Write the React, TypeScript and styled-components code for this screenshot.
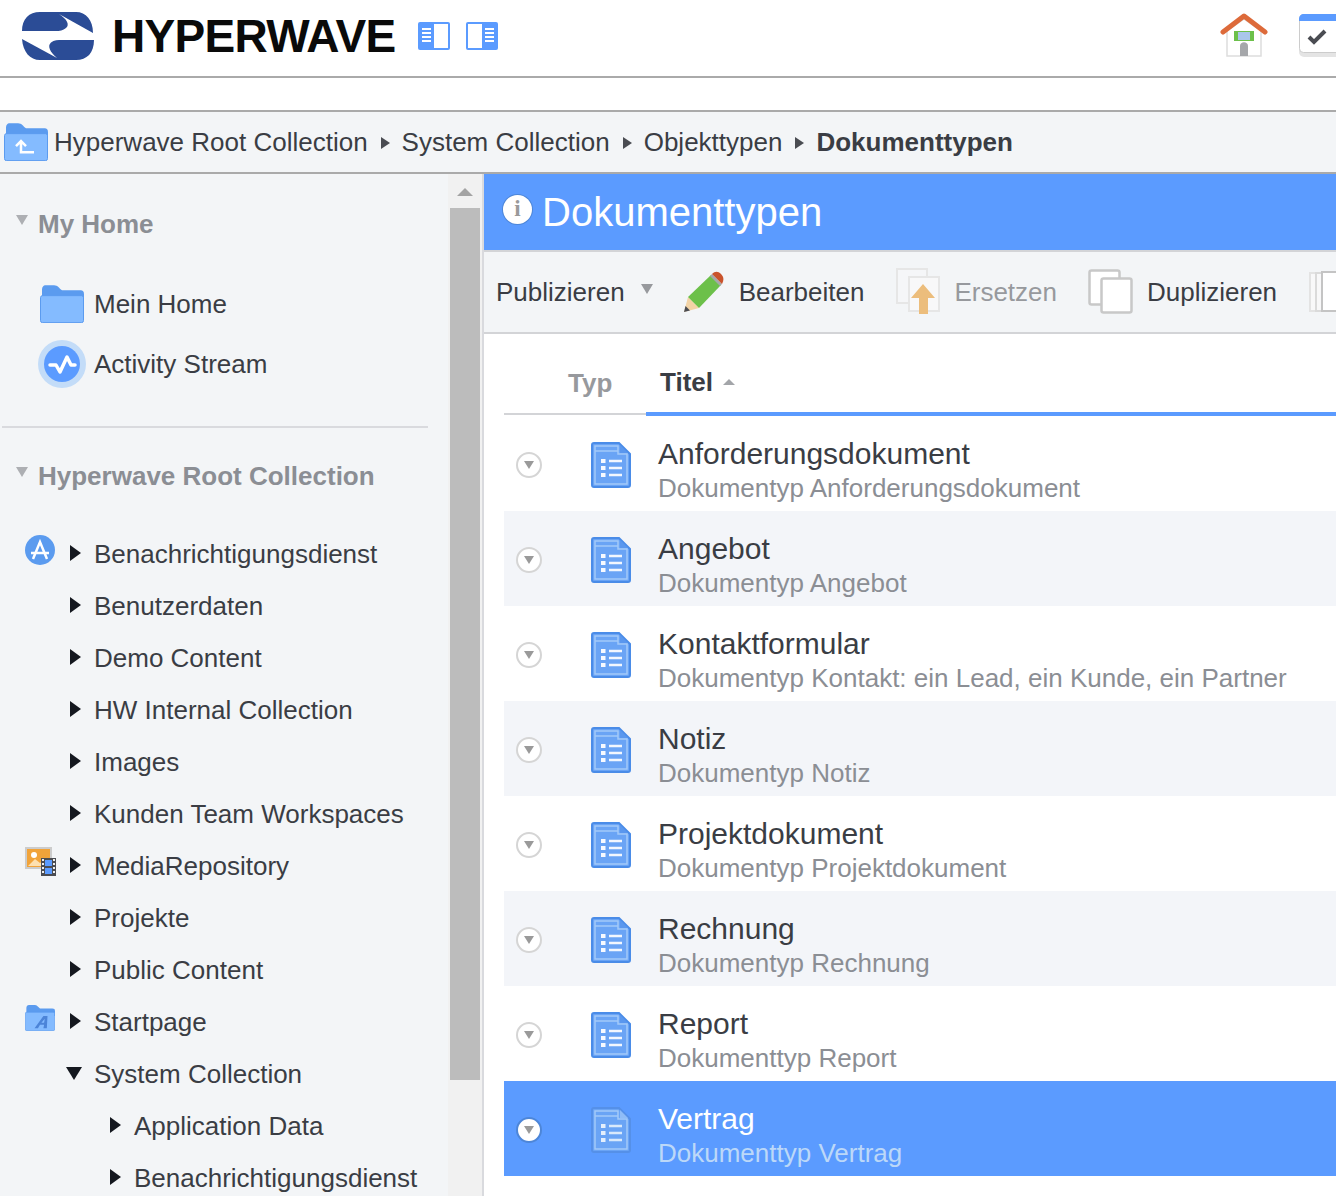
import * as React from 'react'
import styled, { createGlobalStyle } from 'styled-components'

const GlobalStyle = createGlobalStyle`
  html, body {
    margin: 0;
    padding: 0;
    background: #fff;
  }
  body {
    font-family: "Liberation Sans", Arial, sans-serif;
    color: #3a3d44;
  }
`

const Logo = () => (
  <svg width="72" height="48" viewBox="22 12 72 48">
    <path fill="#2b4c96" d="M22 31C22 19 29 12 40 12H76C86 12 93 20 93 33L59 14C67 19 70 25 66 28C63 30.500 60 31 55 31Z" />
    <path fill="#2b4c96" d="M94 40C94 53 87 60 76 60H40C30 60 23 52 22 39L57 58C50 52 47 46 51 42.500C54 40 58 40 62 40Z" />
  </svg>
)

const PanelIcon = ({ flip }: { flip?: boolean }) => (
  <svg width="32" height="28" viewBox="0 0 32 28" style={flip ? { transform: 'scaleX(-1)' } : undefined}>
    <rect width="32" height="28" rx="2" fill="#5b9bff" />
    <rect x="16" y="2" width="14" height="24" fill="#fff" />
    <path stroke="#fff" strokeWidth="2" d="M4 7H13M4 11H13M4 15H13M4 19H13" />
  </svg>
)

const HomeIcon = () => (
  <svg width="48" height="46" viewBox="0 0 48 46">
    <path fill="#fff" stroke="#ddd" strokeWidth="1.500" d="M7 18L24 6L41 18V43H7Z" />
    <path fill="none" stroke="#dd6a3a" strokeWidth="5" strokeLinecap="round" strokeLinejoin="round" d="M3 19L24 3L45 19" />
    <rect x="14" y="18" width="20" height="10" fill="#6cc04a" />
    <rect x="18" y="19" width="12" height="8" fill="#a9c6ea" />
    <path fill="#a5a7aa" d="M20 43V33C20 28 28 28 28 33V43Z" />
  </svg>
)

const TaskIcon = () => (
  <svg width="46" height="46" viewBox="0 0 46 46">
    <rect x="1" y="3" width="44" height="41" rx="5" fill="#e4e4e4" />
    <rect x="1.500" y="1.500" width="44" height="38" rx="4" fill="#fff" stroke="#ccc" />
    <path fill="#5b9bff" d="M1 6C1 3 3 1 6 1H46V8H1Z" />
    <path fill="none" stroke="#4a4c52" strokeWidth="4" d="M11 24L16 29L27 18" />
  </svg>
)

const FolderIcon = ({ size, children }: { size: number; children?: React.ReactNode }) => (
  <svg width={size} height={size * 0.87} viewBox="0 0 44 38">
    <path fill="#5b9bef" d="M2 5C2 2 3 0 6 0H14C18 0 19 3 22 5H40C43 5 44 6 44 9V16H2Z" />
    <rect x="0.500" y="10.500" width="43" height="27" rx="2" fill="#84bbff" stroke="#5b9bef" />
    {children}
  </svg>
)

const ActivityIcon = () => (
  <svg width="48" height="48" viewBox="0 0 48 48">
    <circle cx="24" cy="24" r="24" fill="#c3dcf8" />
    <circle cx="24" cy="24" r="18" fill="#5b9bff" />
    <path fill="none" stroke="#fff" strokeWidth="3.500" strokeLinecap="round" strokeLinejoin="round" d="M12 25H18L22 32L29 17L33 25H37" />
  </svg>
)

const AppIcon = () => (
  <svg width="30" height="30" viewBox="0 0 30 30">
    <circle cx="15" cy="15" r="15" fill="#5b9bef" />
    <path fill="none" stroke="#fff" strokeWidth="2.500" d="M8 24L15 7L22 24M6 18H24" />
  </svg>
)

const MediaIcon = () => (
  <svg width="32" height="30" viewBox="0 0 32 30">
    <rect x="1" y="1" width="25" height="20" fill="#f1a33a" stroke="#ccc" strokeWidth="2" />
    <circle cx="9" cy="8" r="3" fill="#fff" />
    <path fill="#fde0b0" d="M3 19L10 12L15 16L19 13L24 19Z" />
    <rect x="16" y="11" width="15" height="18" fill="#4a4c52" />
    <rect x="20" y="13" width="7" height="6" fill="#5b9bff" />
    <rect x="20" y="21" width="7" height="6" fill="#5b9bff" />
    <path stroke="#eee" strokeWidth="2" strokeDasharray="2 2" d="M18 12V28M29 12V28" />
  </svg>
)

const StartFolderIcon = () => (
  <FolderIcon size={30}>
    <path fill="#4c84d8" d="M14 34L27 16H33L32 34H27L28 29H22L19 34ZM24 26H28L29 20Z" />
  </FolderIcon>
)

const PencilIcon = () => (
  <svg width="42" height="42" viewBox="0 0 42 42">
    <path fill="#f2d3a6" d="M1 41L5 26L16 37Z" />
    <path fill="#4a4c52" d="M1 41L2.500 35L7 39.500Z" />
    <path fill="#6cc04a" d="M5 26L28 4L38 14L16 37Z" />
    <path fill="#a5a7aa" d="M27 5L29 3L39 13L37 15Z" />
    <path fill="#c9532c" d="M29 3C32 0 35 0 38 3C41 6 41 9 39 13Z" />
  </svg>
)

const ReplaceIcon = () => (
  <svg width="46" height="48" viewBox="0 0 46 48">
    <rect x="1" y="1" width="30" height="34" fill="#f5f6f8" stroke="#e6e6e6" strokeWidth="2" />
    <rect x="13" y="9" width="30" height="34" fill="#f8f8f9" stroke="#e6e6e6" strokeWidth="2" />
    <path fill="#ecbd7c" d="M27 16L39 30H32V46H23V30H15Z" />
  </svg>
)

const DuplicateIcon = () => (
  <svg width="46" height="46" viewBox="0 0 46 46">
    <rect x="1.500" y="1.500" width="30" height="34" rx="2" fill="#fff" stroke="#c8c8c8" strokeWidth="2.500" />
    <rect x="13.500" y="9.500" width="30" height="34" rx="2" fill="#fff" stroke="#c8c8c8" strokeWidth="2.500" />
  </svg>
)

const StackIcon = () => (
  <svg width="30" height="42" viewBox="0 0 30 42">
    <rect x="1" y="2" width="24" height="38" fill="#f8f8f9" stroke="#e3e3e3" strokeWidth="2" />
    <rect x="7" y="2" width="24" height="38" fill="#f8f8f9" stroke="#dadada" strokeWidth="2" />
    <rect x="13" y="1" width="30" height="39" fill="#fff" stroke="#c4c4c4" strokeWidth="2" />
  </svg>
)

const DocIcon = ({ selected }: { selected?: boolean }) => (
  <svg width="40" height="46" viewBox="0 0 40 46">
    <path
      fill="#6aa4f5"
      stroke={selected ? '#5590e8' : '#4a8ce8'}
      strokeWidth="2"
      d="M3 1H28L39 12V43C39 44 38 45 37 45H3C2 45 1 44 1 43V3C1 2 2 1 3 1Z"
    />
    <path
      fill="none"
      stroke="#a3c9f9"
      strokeWidth="1.500"
      d="M4 4H27V12H36V42H4ZM4 9H27"
    />
    <path fill={selected ? '#8fbcf7' : '#5a97ee'} d="M29 3V11H37Z" />
    <path
      stroke={selected ? '#e4effc' : '#f7faff'}
      strokeWidth="4"
      d="M10 19H14.500M10 26H14.500M10 33H14.500"
    />
    <path
      stroke={selected ? '#d9e9fb' : '#f2f7fe'}
      strokeWidth="2.500"
      d="M18 19H31M18 26H31M18 33H31"
    />
  </svg>
)

const Arrow = styled.i<{ $size: number; $color: string; $dir: 'up' | 'down' | 'right' }>`
  display: block;
  flex: none;
  width: 0;
  height: 0;
  border-style: solid;
  border-color: transparent;
  ${p => p.$dir === 'right' && `
    border-width: ${p.$size}px 0 ${p.$size}px ${p.$size + 3}px;
    border-left-color: ${p.$color};
  `}
  ${p => p.$dir === 'down' && `
    border-width: ${Math.round(p.$size * 1.6)}px ${p.$size}px 0 ${p.$size}px;
    border-top-color: ${p.$color};
  `}
  ${p => p.$dir === 'up' && `
    border-width: 0 ${p.$size}px ${p.$size}px ${p.$size}px;
    border-bottom-color: ${p.$color};
  `}
`

const Page = styled.div`
  width: 1336px;
  height: 1196px;
  overflow: hidden;
  display: flex;
  flex-direction: column;
`

const Header = styled.header`
  flex: none;
  height: 78px;
  box-sizing: border-box;
  padding: 0 0 4px 22px;
  display: flex;
  align-items: center;
  border-bottom: 2px solid #aaa;
`

const Wordmark = styled.div`
  margin-left: 18px;
  width: 284px;
  font-size: 46px;
  line-height: 50px;
  font-weight: 700;
  letter-spacing: -0.7px;
  color: #0a0a0a;
  white-space: nowrap;
`

const PanelButtons = styled.div`
  margin-left: 22px;
  display: flex;
  gap: 16px;
`

const HeaderRight = styled.div`
  margin-left: auto;
  margin-right: -8px;
  display: flex;
  align-items: center;
  gap: 30px;
`

const Spacer = styled.div`
  flex: none;
  height: 32px;
  border-bottom: 2px solid #aaa;
`

const Breadcrumb = styled.nav`
  flex: none;
  height: 60px;
  padding-left: 4px;
  display: flex;
  align-items: center;
  background: #f3f5f7;
  border-bottom: 2px solid #aaa;
  font-size: 26px;
`

const Crumb = styled.span<{ $current?: boolean }>`
  margin-left: 6px;
  font-weight: ${p => (p.$current ? 700 : 400)};
  white-space: nowrap;
`

const CrumbSep = styled.span`
  margin: 2px 6px 0 13px;
`

const Body = styled.div`
  flex: 1;
  min-height: 0;
  display: flex;
`

const Sidebar = styled.aside`
  flex: none;
  width: 482px;
  display: flex;
  background: #f3f5f7;
  border-right: 2px solid #d9dade;
`

const SidebarContent = styled.div`
  flex: 1;
  min-width: 0;
  overflow: hidden;
`

const Scrollbar = styled.div`
  flex: none;
  width: 34px;
  background: #f1f1f1;
  display: flex;
  flex-direction: column;
  align-items: center;
`

const ScrollUp = styled.div`
  height: 34px;
  padding-top: 14px;
  box-sizing: border-box;
`

const ScrollThumb = styled.div`
  width: 30px;
  height: 872px;
  background: #bcbcbc;
`

const GroupHead = styled.div<{ $pull?: number }>`
  height: 100px;
  margin-top: ${p => p.$pull ?? 0}px;
  padding-left: 16px;
  display: flex;
  align-items: center;
  gap: 10px;
  font-size: 26px;
  font-weight: 700;
  color: #8b8e94;
  white-space: nowrap;
`

const HeadArrow = styled.span`
  margin-top: -8px;
`

const HomeLink = styled.div`
  height: 60px;
  padding-left: 38px;
  display: flex;
  align-items: center;
  font-size: 26px;
`

const HomeLinkIcon = styled.span<{ $inset: number }>`
  flex: none;
  width: 56px;
  display: flex;
  align-items: center;
  padding-left: ${p => p.$inset}px;
  box-sizing: border-box;
`

const Divider = styled.hr`
  margin: 32px 20px 0 2px;
  border: 0;
  border-top: 2px solid #d9dade;
`

const Tree = styled.div`
  margin-top: 2px;
`

const TreeRow = styled.div`
  height: 52px;
  display: flex;
  align-items: center;
  padding-left: 24px;
  font-size: 26px;
  white-space: nowrap;
`

const TreeIconSlot = styled.span`
  flex: none;
  width: 46px;
  height: 40px;
  margin-top: -8px;
  display: flex;
  align-items: center;
  padding-left: 1px;
  box-sizing: border-box;
`

const TreeArrow = styled.span<{ $depth: number }>`
  flex: none;
  width: 24px;
  margin-left: ${p => p.$depth * 40}px;
  margin-top: -2px;
`

const Main = styled.main`
  flex: 1;
  min-width: 0;
`

const TitleBar = styled.div`
  height: 76px;
  padding-left: 19px;
  display: flex;
  align-items: center;
  gap: 10px;
  background: #5b9bff;
  color: #fff;
  font-size: 40px;
`

const InfoBadge = styled.span`
  flex: none;
  width: 29px;
  height: 29px;
  margin-top: -6px;
  border-radius: 50%;
  background: #fff;
  box-shadow: 0 0 0 1px #4d86d8;
  display: flex;
  align-items: center;
  justify-content: center;
  font-family: "Liberation Serif", serif;
  font-weight: 700;
  font-size: 23px;
  color: #9a9a9a;
`

const Toolbar = styled.div`
  height: 80px;
  padding-left: 12px;
  display: flex;
  align-items: center;
  overflow: hidden;
  background: #f3f5f7;
  border-top: 2px solid #d3d4d7;
  border-bottom: 2px solid #d3d4d7;
`

const ToolItem = styled.div<{ $gap: number; $off: number; $disabled?: boolean }>`
  flex: none;
  display: flex;
  align-items: center;
  gap: ${p => p.$gap}px;
  margin-right: ${p => p.$off}px;
  font-size: 26px;
  color: ${p => (p.$disabled ? '#97999d' : '#3a3d44')};
  white-space: nowrap;

  svg {
    flex: none;
    display: block;
  }
`

const ToolArrow = styled.span`
  margin-top: -6px;
`

const ListWrap = styled.div`
  padding-left: 20px;
`

const ColumnHead = styled.div`
  height: 82px;
  display: flex;
`

const TypeHead = styled.div`
  width: 142px;
  height: 81px;
  padding: 34px 0 0 64px;
  box-sizing: border-box;
  font-size: 26px;
  font-weight: 700;
  color: #97999d;
  border-bottom: 2px solid #d3d4d7;
`

const TitleHead = styled.div`
  flex: 1;
  padding: 33px 0 0 14px;
  display: flex;
  gap: 10px;
  font-size: 26px;
  font-weight: 700;
  border-bottom: 4px solid #5b9bff;
`

const SortArrow = styled.span`
  margin-top: 12px;
`

const Row = styled.div<{ $selected?: boolean; $odd: boolean }>`
  height: 95px;
  display: grid;
  grid-template-columns: 87px 67px 1fr;
  align-items: center;
  background: ${p => (p.$selected ? '#5b9bff' : p.$odd ? '#f3f5f9' : '#fff')};
`

const Toggle = styled.span<{ $selected?: boolean }>`
  width: 26px;
  height: 26px;
  box-sizing: border-box;
  margin: 2px 0 0 12px;
  border-radius: 50%;
  background: #fff;
  border: 2px solid ${p => (p.$selected ? '#4d86d8' : '#d5d5d5')};
  display: flex;
  align-items: center;
  justify-content: center;
  padding-top: 1px;
`

const RowIcon = styled.span`
  display: flex;
  margin-top: 2px;
`

const RowText = styled.div`
  white-space: nowrap;
  padding-top: 12px;
`

const RowTitle = styled.div<{ $selected?: boolean }>`
  font-size: 30px;
  line-height: 36px;
  color: ${p => (p.$selected ? '#fff' : '#3a3d44')};
`

const RowSub = styled.div<{ $selected?: boolean }>`
  font-size: 26px;
  line-height: 32px;
  color: ${p => (p.$selected ? '#bcd8f8' : '#8b8e94')};
`

const crumbs = ['Hyperwave Root Collection', 'System Collection', 'Objekttypen']

type TreeItem = { label: string; depth: number; open?: boolean; icon?: React.ReactNode }

const treeItems: TreeItem[] = [
  { label: 'Benachrichtigungsdienst', depth: 0, icon: <AppIcon /> },
  { label: 'Benutzerdaten', depth: 0 },
  { label: 'Demo Content', depth: 0 },
  { label: 'HW Internal Collection', depth: 0 },
  { label: 'Images', depth: 0 },
  { label: 'Kunden Team Workspaces', depth: 0 },
  { label: 'MediaRepository', depth: 0, icon: <MediaIcon /> },
  { label: 'Projekte', depth: 0 },
  { label: 'Public Content', depth: 0 },
  { label: 'Startpage', depth: 0, icon: <StartFolderIcon /> },
  { label: 'System Collection', depth: 0, open: true },
  { label: 'Application Data', depth: 1 },
  { label: 'Benachrichtigungsdienst', depth: 1 },
]

const rows = [
  { title: 'Anforderungsdokument', sub: 'Dokumentyp Anforderungsdokument' },
  { title: 'Angebot', sub: 'Dokumentyp Angebot' },
  { title: 'Kontaktformular', sub: 'Dokumentyp Kontakt: ein Lead, ein Kunde, ein Partner' },
  { title: 'Notiz', sub: 'Dokumentyp Notiz' },
  { title: 'Projektdokument', sub: 'Dokumentyp Projektdokument' },
  { title: 'Rechnung', sub: 'Dokumentyp Rechnung' },
  { title: 'Report', sub: 'Dokumenttyp Report' },
  { title: 'Vertrag', sub: 'Dokumenttyp Vertrag', selected: true },
]

export default function App() {
  return (
    <Page>
      <GlobalStyle />
      <Header>
        <Logo />
        <Wordmark>HYPERWAVE</Wordmark>
        <PanelButtons>
          <PanelIcon />
          <PanelIcon flip />
        </PanelButtons>
        <HeaderRight>
          <HomeIcon />
          <TaskIcon />
        </HeaderRight>
      </Header>
      <Spacer />
      <Breadcrumb>
        <FolderIcon size={44}>
          <path fill="none" stroke="#fff" strokeWidth="2.500" d="M12 23L17 18L22 23M17 18V29H30" />
        </FolderIcon>
        {crumbs.map(c => (
          <React.Fragment key={c}>
            <Crumb>{c}</Crumb>
            <CrumbSep><Arrow $dir="right" $size={6} $color="#4a4c52" /></CrumbSep>
          </React.Fragment>
        ))}
        <Crumb $current>Dokumenttypen</Crumb>
      </Breadcrumb>
      <Body>
        <Sidebar>
          <SidebarContent>
            <GroupHead>
              <HeadArrow><Arrow $dir="down" $size={6} $color="#adafb3" /></HeadArrow>
              My Home
            </GroupHead>
            <HomeLink>
              <HomeLinkIcon $inset={2}><FolderIcon size={44} /></HomeLinkIcon>
              Mein Home
            </HomeLink>
            <HomeLink>
              <HomeLinkIcon $inset={0}><ActivityIcon /></HomeLinkIcon>
              Activity Stream
            </HomeLink>
            <Divider />
            <GroupHead $pull={-2}>
              <HeadArrow><Arrow $dir="down" $size={6} $color="#adafb3" /></HeadArrow>
              Hyperwave Root Collection
            </GroupHead>
            <Tree>
              {treeItems.map(item => (
                <TreeRow key={item.label + item.depth}>
                  <TreeIconSlot>{item.icon}</TreeIconSlot>
                  <TreeArrow $depth={item.depth}>
                    {item.open
                      ? <Arrow $dir="down" $size={8} $color="#14181f" style={{ marginLeft: -4 }} />
                      : <Arrow $dir="right" $size={8} $color="#14181f" />}
                  </TreeArrow>
                  {item.label}
                </TreeRow>
              ))}
            </Tree>
          </SidebarContent>
          <Scrollbar>
            <ScrollUp><Arrow $dir="up" $size={8} $color="#a3a3a3" /></ScrollUp>
            <ScrollThumb />
          </Scrollbar>
        </Sidebar>
        <Main>
          <TitleBar>
            <InfoBadge>i</InfoBadge>
            Dokumenttypen
          </TitleBar>
          <Toolbar>
            <ToolItem $gap={16} $off={30}>
              Publizieren
              <ToolArrow><Arrow $dir="down" $size={6} $color="#97999d" /></ToolArrow>
            </ToolItem>
            <ToolItem $gap={14} $off={32}>
              <PencilIcon />
              Bearbeiten
            </ToolItem>
            <ToolItem $gap={12} $off={31} $disabled>
              <ReplaceIcon />
              Ersetzen
            </ToolItem>
            <ToolItem $gap={13} $off={32}>
              <DuplicateIcon />
              Duplizieren
            </ToolItem>
            <ToolItem $gap={0} $off={0}>
              <StackIcon />
            </ToolItem>
          </Toolbar>
          <ListWrap>
            <ColumnHead>
              <TypeHead>Typ</TypeHead>
              <TitleHead>
                Titel
                <SortArrow><Arrow $dir="up" $size={6} $color="#a3a5a9" /></SortArrow>
              </TitleHead>
            </ColumnHead>
            {rows.map((r, i) => (
              <Row key={r.title} $selected={r.selected} $odd={i % 2 === 1}>
                <Toggle $selected={r.selected}>
                  <Arrow $dir="down" $size={5} $color="#9a9a9a" />
                </Toggle>
                <RowIcon><DocIcon selected={r.selected} /></RowIcon>
                <RowText>
                  <RowTitle $selected={r.selected}>{r.title}</RowTitle>
                  <RowSub $selected={r.selected}>{r.sub}</RowSub>
                </RowText>
              </Row>
            ))}
          </ListWrap>
        </Main>
      </Body>
    </Page>
  )
}
